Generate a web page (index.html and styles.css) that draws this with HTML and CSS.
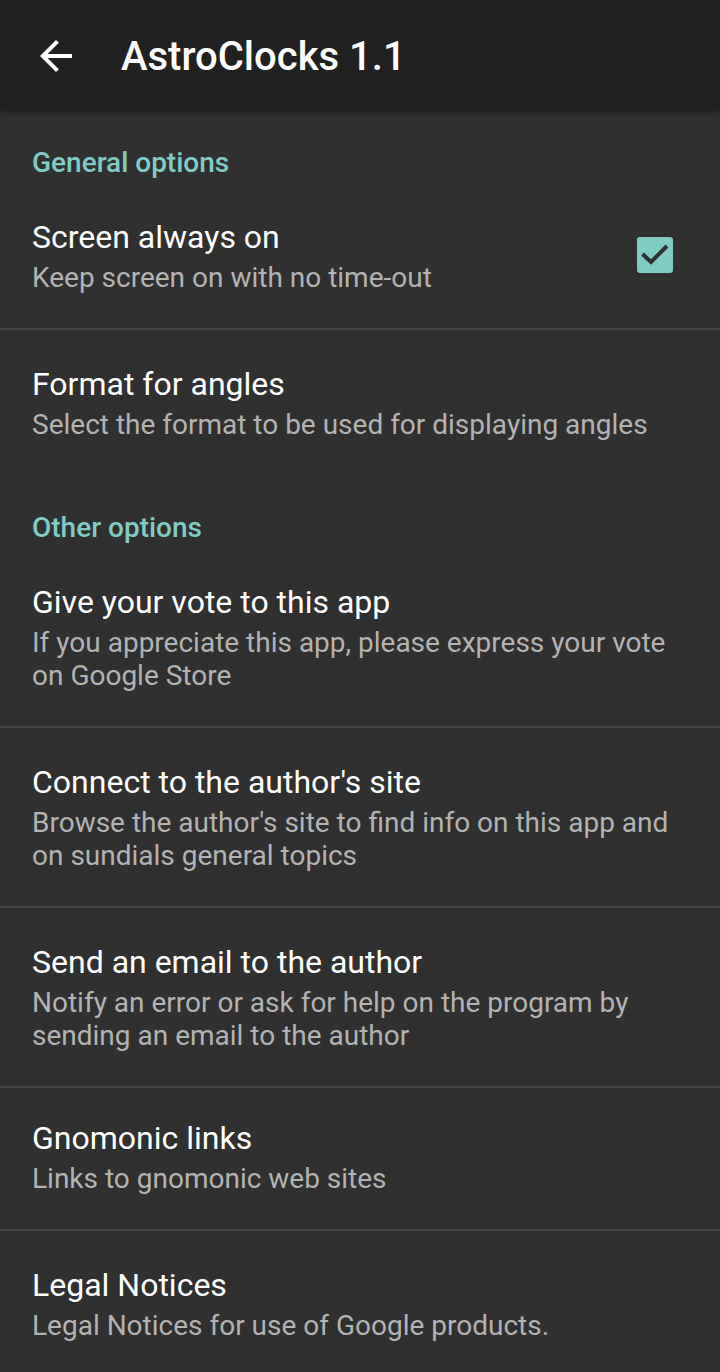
FILE: index.html
```html
<!DOCTYPE html>
<html lang="en">
<head>
  <meta charset="UTF-8">
  <meta name="viewport" content="width=device-width, initial-scale=1.0">
  <title>AstroClocks 1.1</title>
  <link rel="stylesheet" href="styles.css">
</head>
<body>
  <header class="appbar">
    <button class="back" aria-label="Back">
      <svg width="48" height="48" viewBox="0 0 24 24"><path fill="#fff" d="M20 11H7.83l5.59-5.59L12 4l-8 8 8 8 1.41-1.41L7.83 13H20v-2z"/></svg>
    </button>
    <h1>AstroClocks 1.1</h1>
  </header>

  <main class="prefs">
    <h2 class="category">General options</h2>
    <div class="pref with-widget">
      <div class="pref-text">
        <div class="pref-title">Screen always on</div>
        <div class="pref-summary">Keep screen on with no time-out</div>
      </div>
      <span class="checkbox checked">
        <svg width="36" height="36" viewBox="0 0 36 36"><path d="M5.5 17l8.5 8 16-16" fill="none" stroke="#303030" stroke-width="4"/></svg>
      </span>
    </div>
    <div class="pref last">
      <div class="pref-title">Format for angles</div>
      <div class="pref-summary">Select the format to be used for displaying angles</div>
    </div>

    <h2 class="category">Other options</h2>
    <div class="pref">
      <div class="pref-title">Give your vote to this app</div>
      <div class="pref-summary">If you appreciate this app, please express your vote on Google Store</div>
    </div>
    <div class="pref">
      <div class="pref-title">Connect to the author's site</div>
      <div class="pref-summary">Browse the author's site to find info on this app and on sundials general topics</div>
    </div>
    <div class="pref">
      <div class="pref-title">Send an email to the author</div>
      <div class="pref-summary">Notify an error or ask for help on the program by sending an email to the author</div>
    </div>
    <div class="pref single">
      <div class="pref-title">Gnomonic links</div>
      <div class="pref-summary">Links to gnomonic web sites</div>
    </div>
    <div class="pref last">
      <div class="pref-title">Legal Notices</div>
      <div class="pref-summary">Legal Notices for use of Google products.</div>
    </div>
  </main>
</body>
</html>
```

FILE: styles.css
```css
body { margin: 0; background: #303030; color: #fff; font-family: Roboto, "Noto Sans", sans-serif; }

.appbar { position: relative; z-index: 1; height: 110px; background: #212121; display: flex; align-items: center; box-shadow: 0 2px 6px rgba(0, 0, 0, 0.45); }
.back { width: 48px; height: 48px; margin: 2px 0 0 32px; padding: 0; border: 0; background: none; display: flex; }
.appbar h1 { margin: 3px 0 0 41px; font-size: 40px; font-weight: 500; line-height: 48px; }

.category { margin: 0; padding: 36px 32px 4px 32px; font-size: 28px; font-weight: 500; line-height: 33px; color: #80cbc4; }

.pref { padding: 34px 32px 34px 32px; border-bottom: 2px solid #484848; }
.pref.single { padding-top: 30px; }
.pref.last { border-bottom: 0; }
.pref.with-widget { display: flex; align-items: center; padding-right: 47px; }
.pref-text { flex: 1; }
.pref-title { font-size: 32px; line-height: 40px; }
.pref-summary { margin-top: 4px; font-size: 28px; line-height: 33px; color: #b3b3b3; }

.checkbox { width: 36px; height: 36px; margin-top: -2px; border-radius: 3px; background: #80cbc4; display: flex; }
```
